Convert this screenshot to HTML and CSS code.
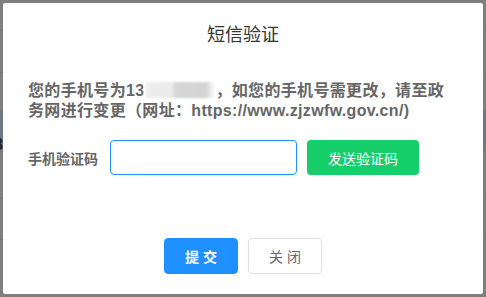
FILE: index.html
```html
<!DOCTYPE html>
<html lang="zh-CN">
<head>
<meta charset="utf-8">
<title>短信验证</title>
<link rel="stylesheet" href="styles.css">
</head>
<body>
<div class="page">
  <div class="bg-row r1"></div>
  <div class="bg-row r2"></div>
  <div class="bg-row r3"></div>
  <div class="bg-row r4 blue"><span class="bg-glyph">8</span></div>
  <div class="bg-row r5"></div>
  <div class="bg-row r6"></div>
  <div class="bg-row r7"></div>
</div>
<div class="dialog">
  <h2 class="title">短信验证</h2>
  <p class="message">您的手机号为13<span class="mask"></span>，如您的手机号需更改，请至政务网进行变更（网址：https://www.zjzwfw.gov.cn/)</p>
  <div class="form-row">
    <label class="label" for="code">手机验证码</label>
    <input class="input" id="code" type="text">
    <button class="btn-send" type="button">发送验证码</button>
  </div>
  <div class="footer">
    <button class="btn btn-primary" type="button">提 交</button>
    <button class="btn btn-default" type="button">关 闭</button>
  </div>
</div>
</body>
</html>
```

FILE: styles.css
```css
html, body {
  margin: 0;
  padding: 0;
}
body {
  width: 486px;
  height: 297px;
  overflow: hidden;
  background: #7f7f7f;
  font-family: "Liberation Sans", "Noto Sans CJK SC", sans-serif;
}
.page {
  display: flex;
  flex-direction: column;
}
.bg-row {
  border-bottom: 1px solid #767676;
  box-sizing: border-box;
  display: flex;
  align-items: center;
}
.r1 { height: 31px; }
.r2 { height: 42px; }
.r3 { height: 38px; }
.r4 { height: 40px; }
.r5 { height: 48px; }
.r6 { height: 41px; }
.r7 { height: 53px; }
.blue {
  background: #6f7883;
  border-bottom-color: #7a7a7a;
}
.bg-glyph {
  margin-left: -6px;
  margin-top: 28px;
  font-size: 16px;
  font-weight: bold;
  color: #222;
}
.dialog {
  position: absolute;
  left: 3px;
  top: 3px;
  width: 480px;
  height: 291px;
  background: #fff;
  border-radius: 2px;
  box-sizing: border-box;
  padding: 20px 25px 0;
  display: flex;
  flex-direction: column;
}
.title {
  margin: 0;
  font-size: 18px;
  line-height: 24px;
  font-weight: normal;
  color: #333;
  text-align: center;
}
.message {
  margin: 34px 0 0;
  width: 426px;
  font-size: 16px;
  line-height: 20px;
  letter-spacing: 0.33px;
  font-weight: bold;
  color: #666;
}
.mask {
  display: inline-block;
  width: 71px;
  height: 16px;
  vertical-align: -2px;
  background: linear-gradient(90deg, #fff 0px, #ededed 4px, #ececec 28px, #d6d6d6 31px, #d4d4d4 62px, #fff 71px);
  filter: blur(1px);
}
.form-row {
  margin-top: 19px;
  display: flex;
  align-items: center;
  height: 35px;
}
.label {
  width: 82px;
  font-size: 14px;
  font-weight: bold;
  color: #666;
}
.input {
  width: 187px;
  height: 35px;
  box-sizing: border-box;
  border: 1px solid #1e90ff;
  border-radius: 4px;
  outline: none;
  margin: 0;
  padding: 0 10px;
}
.btn-send {
  margin: 0 0 0 10px;
  width: 112px;
  height: 35px;
  border: none;
  border-radius: 4px;
  background: #17cf6a;
  color: #fff;
  font-family: "Liberation Sans", "Noto Sans CJK SC", sans-serif;
  font-size: 14px;
  padding: 0;
}
.footer {
  margin-top: 63px;
  display: flex;
  justify-content: center;
  gap: 10px;
}
.btn {
  width: 74px;
  height: 36px;
  box-sizing: border-box;
  border-radius: 4px;
  font-family: "Liberation Sans", "Noto Sans CJK SC", sans-serif;
  font-size: 14px;
  padding: 0;
  margin: 0;
}
.btn-primary {
  background: #1e90ff;
  border: 1px solid #1e90ff;
  color: #fff;
  font-weight: bold;
}
.btn-default {
  background: #fff;
  border: 1px solid #dcdfe6;
  color: #666;
}
```
